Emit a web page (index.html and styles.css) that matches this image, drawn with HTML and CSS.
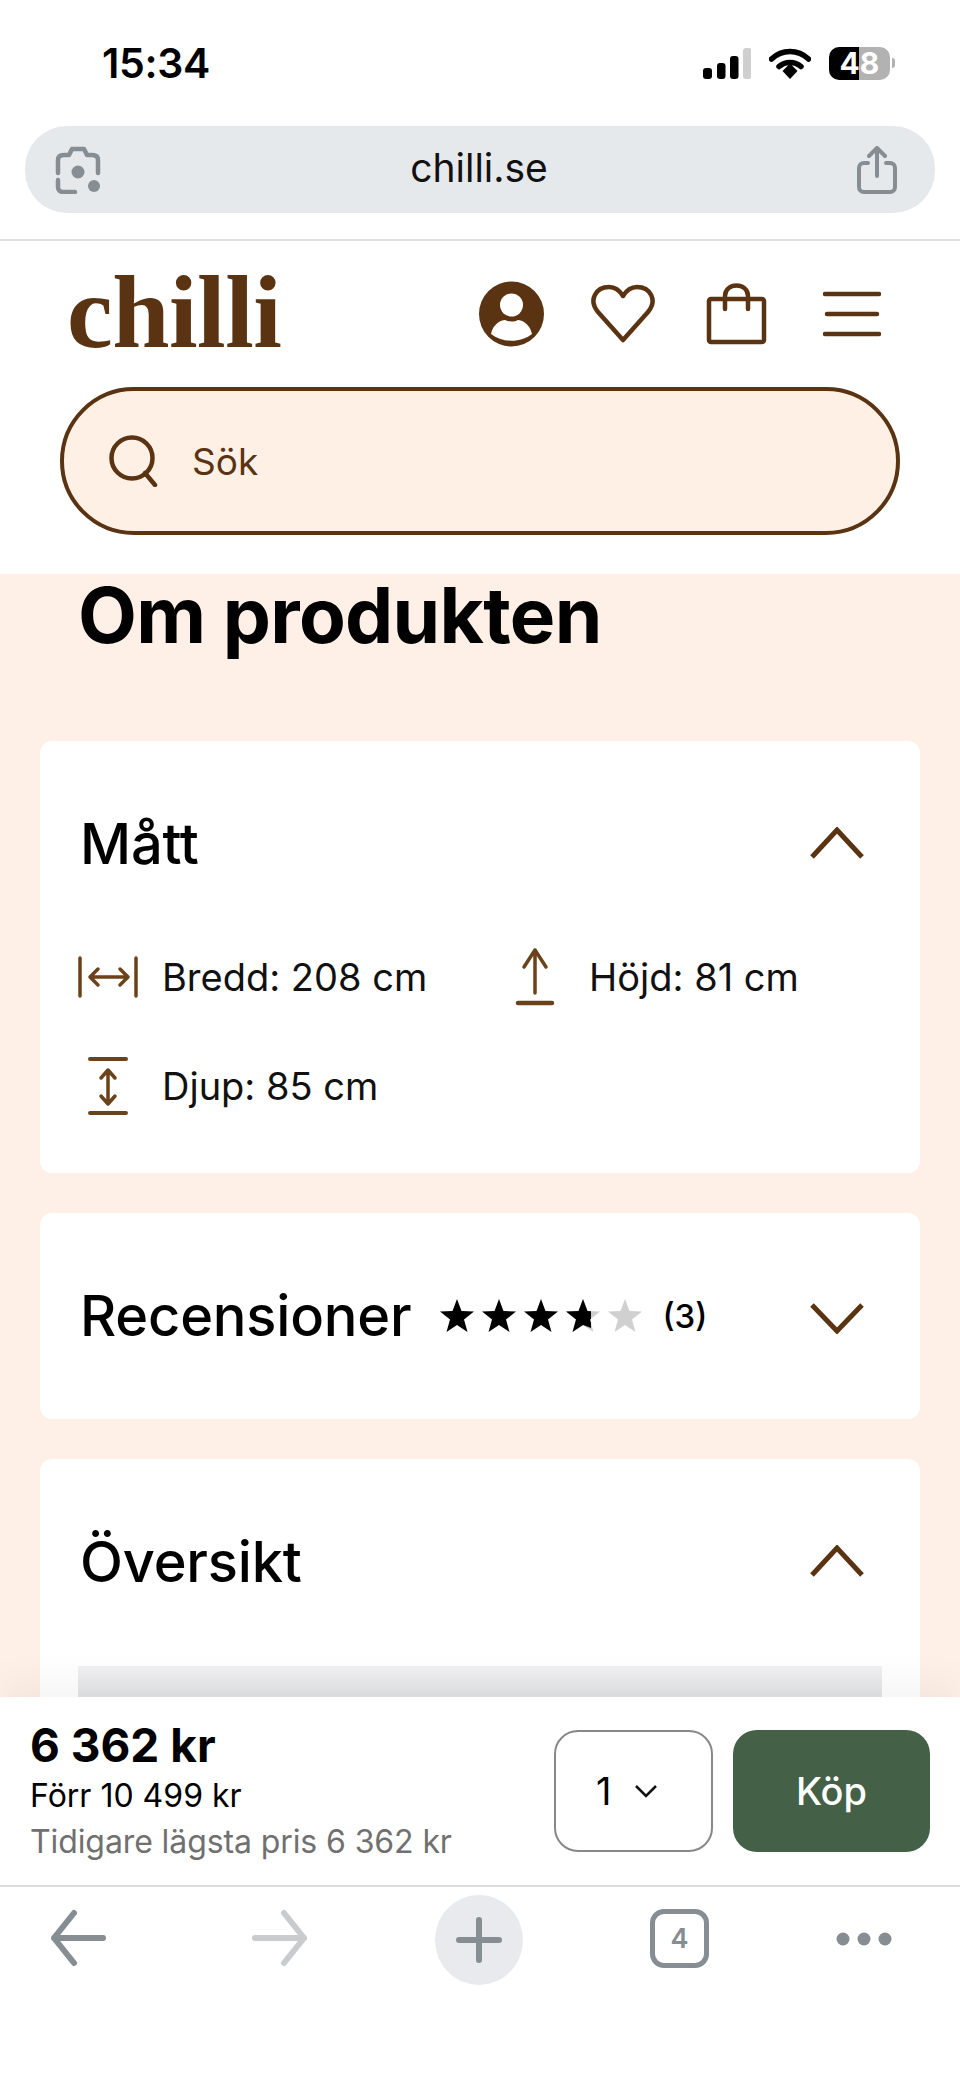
FILE: index.html

```html
<!DOCTYPE html>
<html lang="sv">
<head>
  <meta charset="UTF-8" />
  <meta name="viewport" content="width=device-width, initial-scale=1.0" />
  <title>Chilli - Om produkten</title>
  <link rel="stylesheet" href="styles.css">
</head>
<body>
  <div class="phone">
    <div class="status-bar">
      <span class="time">15:34</span>
      <div class="status-icons">
        <svg class="signal" width="48" height="31" viewBox="0 0 48 31">
          <rect x="0" y="20" width="9" height="11" rx="3" fill="#000"/>
          <rect x="14" y="15" width="8.500" height="16" rx="3" fill="#000"/>
          <rect x="27" y="8" width="8.500" height="23" rx="3" fill="#000"/>
          <rect x="40" y="0" width="8.500" height="31" rx="3" fill="#cfcfcf"/>
        </svg>
        <svg class="wifi" width="42" height="31" viewBox="0 0 42 31">
          <path d="M2.500 11 C13 1 29 1 39.500 11" fill="none" stroke="#000" stroke-width="5.500" stroke-linecap="round"/>
          <path d="M10 18.500 C16 13 26 13 32 18.500" fill="none" stroke="#000" stroke-width="5.500" stroke-linecap="round"/>
          <path d="M13.500 23 L21 15.500 L28.500 23 L21 31 Z" fill="#000"/>
        </svg>
        <div class="battery"><span>48</span></div>
        <span class="battery-nub"></span>
      </div>
    </div>

    <div class="address-wrap">
      <div class="address-bar">
        <svg width="46" height="48" viewBox="0 0 46 48" fill="none" stroke="#868e94" stroke-width="4.500" stroke-linecap="round" stroke-linejoin="round">
          <path d="M3 27 V14 C3 11 5 9 9 9 H14 L17 3 H29 L32 9 H37 C41 9 43 11 43 14 V27"/>
          <path d="M3 34 V41 C3 44 5 46 8 46 H20"/>
          <circle cx="23" cy="26" r="6.500" fill="#868e94" stroke="none"/>
          <circle cx="39" cy="40" r="6" fill="#868e94" stroke="none"/>
        </svg>
        <span class="url">chilli.se</span>
        <svg width="40" height="48" viewBox="0 0 40 48" fill="none" stroke="#868e94" stroke-width="4" stroke-linecap="round" stroke-linejoin="round">
          <path d="M20 30 V3 M12 10 L20 2 L28 10"/>
          <path d="M11 17 H7 C4 17 2 19 2 22 V41 C2 44 4 46 7 46 H33 C36 46 38 44 38 41 V22 C38 19 36 17 33 17 H29"/>
        </svg>
      </div>
    </div>

    <header class="site-header">
      <div class="header-row">
        <span class="logo">chilli</span>
        <nav class="header-icons">
          <svg class="icon-user" width="65" height="66" viewBox="0 0 65 66">
            <circle cx="32.500" cy="33" r="32.500" fill="#5a3412"/>
            <circle cx="32.500" cy="24" r="11.500" fill="#fff"/>
            <path d="M12 53 C14 43 22 39 26 39 C30 41 35 41 39 39 C43 39 51 43 53 53 C42 62 23 62 12 53 Z" fill="#fff"/>
          </svg>
          <svg class="icon-heart" width="64" height="60" viewBox="0 0 64 60" fill="none" stroke="#5a3412" stroke-width="4.500" stroke-linejoin="round">
            <path d="M32 56 L7 28 C-3 16 5 3 18 3 C25 3 29 7 32 12 C35 7 39 3 46 3 C59 3 67 16 57 28 Z"/>
          </svg>
          <svg class="icon-bag" width="61" height="62" viewBox="0 0 61 62" fill="none" stroke="#5a3412" stroke-width="4.500" stroke-linecap="round" stroke-linejoin="round">
            <rect x="3" y="16" width="55" height="43" rx="2"/>
            <path d="M19 26 V13 C19 -1 42 -1 42 13 V26"/>
          </svg>
          <svg class="icon-menu" width="58" height="46" viewBox="0 0 58 46" fill="none" stroke="#5a3412" stroke-width="4.500" stroke-linecap="round">
            <path d="M2 3 H56 M4 23 H54 M2 43 H56"/>
          </svg>
        </nav>
      </div>
      <div class="search">
        <svg width="50" height="52" viewBox="0 0 50 52" fill="none" stroke="#5a3412" stroke-width="4.500" stroke-linecap="round">
          <circle cx="24" cy="23" r="20.500"/>
          <path d="M37 38 L47 50"/>
        </svg>
        <span class="search-text">Sök</span>
      </div>
    </header>

    <main class="content">
      <h1>Om produkten</h1>

      <section class="card">
        <div class="card-head">
          <h2>Mått</h2>
          <svg class="chevron" width="54" height="32" viewBox="0 0 54 32" fill="none" stroke="#5a3412" stroke-width="5">
            <path d="M2 30 L27 3 L52 30"/>
          </svg>
        </div>
        <div class="measures">
          <div class="measure">
            <svg width="60" height="60" viewBox="0 0 60 60" fill="none" stroke="#6b421a" stroke-width="3.500" stroke-linecap="round" stroke-linejoin="round">
              <path d="M2 11 V49 M58 11 V49 M14 30 H48 M20 22 L12 30 L20 38 M42 22 L50 30 L42 38"/>
            </svg>
            <span>Bredd: 208 cm</span>
          </div>
          <div class="measure">
            <svg width="60" height="60" viewBox="0 0 60 60" fill="none" stroke="#6b421a" stroke-linecap="round" stroke-linejoin="round">
              <path stroke-width="3.500" d="M30 3 V46 M19 20 L30 3 L41 20"/>
              <path stroke-width="4.500" d="M13 56 H47"/>
            </svg>
            <span>Höjd: 81 cm</span>
          </div>
          <div class="measure">
            <svg width="60" height="60" viewBox="0 0 60 60" fill="none" stroke="#6b421a" stroke-linecap="round" stroke-linejoin="round">
              <path stroke-width="4" d="M12 3 H48 M12 57 H48"/>
              <path stroke-width="3.500" d="M30 14 V48 M23 22 L30 14 L37 22 M23 40 L30 48 L37 40"/>
            </svg>
            <span>Djup: 85 cm</span>
          </div>
        </div>
      </section>

      <section class="card">
        <div class="card-head">
          <div class="review-title">
            <h2>Recensioner</h2>
            <div class="stars">
              <svg width="34" height="34" viewBox="0 0 34 34"><path class="star-on" d="M17 0 L21.500 12 L34 12.500 L24 20.500 L27.500 33 L17 26 L6.500 33 L10 20.500 L0 12.500 L12.500 12 Z"/></svg>
              <svg width="34" height="34" viewBox="0 0 34 34"><path class="star-on" d="M17 0 L21.500 12 L34 12.500 L24 20.500 L27.500 33 L17 26 L6.500 33 L10 20.500 L0 12.500 L12.500 12 Z"/></svg>
              <svg width="34" height="34" viewBox="0 0 34 34"><path class="star-on" d="M17 0 L21.500 12 L34 12.500 L24 20.500 L27.500 33 L17 26 L6.500 33 L10 20.500 L0 12.500 L12.500 12 Z"/></svg>
              <svg width="34" height="34" viewBox="0 0 34 34">
                <path class="star-off" d="M17 0 L21.500 12 L34 12.500 L24 20.500 L27.500 33 L17 26 L6.500 33 L10 20.500 L0 12.500 L12.500 12 Z"/>
                <path class="star-on" d="M17 0 L21.500 12 L25 12.150 V20 L24 20.500 L25 24 V29 L17 26 L6.500 33 L10 20.500 L0 12.500 L12.500 12 Z"/>
              </svg>
              <svg width="34" height="34" viewBox="0 0 34 34"><path class="star-off" d="M17 0 L21.500 12 L34 12.500 L24 20.500 L27.500 33 L17 26 L6.500 33 L10 20.500 L0 12.500 L12.500 12 Z"/></svg>
            </div>
            <span class="review-count">(3)</span>
          </div>
          <svg class="chevron-down" width="54" height="32" viewBox="0 0 54 32" fill="none" stroke="#5a3412" stroke-width="5">
            <path d="M2 3 L27 29 L52 3"/>
          </svg>
        </div>
      </section>

      <section class="card">
        <div class="card-head">
          <h2>Översikt</h2>
          <svg class="chevron" width="54" height="32" viewBox="0 0 54 32" fill="none" stroke="#5a3412" stroke-width="5">
            <path d="M2 30 L27 3 L52 30"/>
          </svg>
        </div>
        <div class="overview-img"></div>
      </section>
    </main>

    <div class="buy-bar">
      <div class="prices">
        <div class="price">6 362 kr</div>
        <div class="old-price">Förr 10 499 kr</div>
        <div class="low-price">Tidigare lägsta pris 6 362 kr</div>
      </div>
      <div class="qty">
        <span>1</span>
        <svg width="24" height="14" viewBox="0 0 24 14" fill="none" stroke="#111" stroke-width="2.500">
          <path d="M2 2 L12 12 L22 2"/>
        </svg>
      </div>
      <button class="buy-btn">Köp</button>
    </div>

    <div class="toolbar">
      <svg width="56" height="60" viewBox="0 0 56 60" fill="none" stroke="#868e94" stroke-width="6" stroke-linecap="round" stroke-linejoin="round">
        <path d="M53 30 H4 M24 5 L4 30 L24 55"/>
      </svg>
      <svg class="forward" width="56" height="60" viewBox="0 0 56 60" fill="none" stroke="#c9cbcd" stroke-width="6" stroke-linecap="round" stroke-linejoin="round">
        <path d="M3 30 H52 M32 5 L52 30 L32 55"/>
      </svg>
      <div class="new-tab">
        <svg width="46" height="46" viewBox="0 0 46 46" fill="none" stroke="#868e94" stroke-width="6" stroke-linecap="round">
          <path d="M23 3 V43 M3 23 H43"/>
        </svg>
      </div>
      <div class="tabs">4</div>
      <svg width="56" height="16" viewBox="0 0 56 16" fill="#868e94">
        <circle cx="7" cy="8" r="6.500"/>
        <circle cx="28" cy="8" r="6.500"/>
        <circle cx="49" cy="8" r="6.500"/>
      </svg>
    </div>
  </div>
</body>
</html>
```

FILE: styles.css

```css
* {
  box-sizing: border-box;
}

body {
  margin: 0;
  background: #fff;
  font-family: 'Inter', 'Noto Sans', sans-serif;
  color: #000;
}

svg {
  display: block;
  flex-shrink: 0;
}

.phone {
  width: 960px;
  height: 2078px;
  display: flex;
  flex-direction: column;
  overflow: hidden;
}

/* iOS status bar */
.status-bar {
  height: 126px;
  flex-shrink: 0;
  display: flex;
  justify-content: space-between;
  align-items: center;
  padding: 0 65px 0 102px;
}

.time {
  font-size: 41px;
  font-weight: 600;
  letter-spacing: -0.3px;
}

.status-icons {
  display: flex;
  align-items: center;
}

.wifi {
  margin-left: 18px;
}

.battery {
  width: 61px;
  height: 33px;
  margin-left: 18px;
  border-radius: 10px;
  background: linear-gradient(to right, #000 49%, #b2b2b2 49%);
  color: #fff;
  font-size: 30px;
  font-weight: 700;
  display: flex;
  justify-content: center;
  align-items: center;
}

.battery-nub {
  width: 3px;
  height: 10px;
  margin-left: 2px;
  border-radius: 0 3px 3px 0;
  background: #b2b2b2;
}

/* browser address bar */
.address-wrap {
  height: 115px;
  flex-shrink: 0;
  padding: 0 25px;
  border-bottom: 2px solid #dfdfdf;
}

.address-bar {
  height: 87px;
  border-radius: 42px;
  background: #e6e9ec;
  display: flex;
  justify-content: space-between;
  align-items: center;
  padding: 0 38px 0 30px;
}

.url {
  font-size: 39px;
  color: #111;
  margin-top: -4px;
}

/* site header */
.site-header {
  height: 333px;
  flex-shrink: 0;
  padding: 12px 60px 0;
}

.header-row {
  height: 122px;
  margin-bottom: 12px;
  display: flex;
  justify-content: space-between;
  align-items: center;
  padding: 0 19px 0 7px;
}

.logo {
  font-family: 'Liberation Serif', serif;
  font-size: 103px;
  font-weight: 700;
  line-height: 1;
  color: #5a3412;
  letter-spacing: -0.5px;
  margin-top: -3px;
}

.header-icons {
  display: flex;
  align-items: center;
  gap: 47px;
}

.icon-bag {
  margin-left: 4px;
}

.icon-menu {
  margin-left: 9px;
}

.search {
  height: 148px;
  border: 4.500px solid #5a3412;
  border-radius: 74px;
  background: #fff0e6;
  display: flex;
  align-items: center;
  gap: 34px;
  padding: 0 44px;
}

.search-text {
  font-size: 37px;
  color: #5a3412;
}

/* product content, runs on under the buy bar */
.content {
  flex: 1;
  min-height: 0;
  background: #fef0e6;
  padding: 0 40px;
}

h1 {
  margin: 0 0 81px 38px;
  font-size: 76.500px;
  line-height: 86px;
  font-weight: 700;
  letter-spacing: -0.7px;
  position: relative;
  top: -2px;
}

h2 {
  margin: 0;
  font-size: 56px;
  font-weight: 500;
  letter-spacing: -0.2px;
}

.card {
  background: #fff;
  border-radius: 12px;
  margin-bottom: 40px;
}

.card-head {
  height: 206px;
  display: flex;
  justify-content: space-between;
  align-items: center;
  padding: 0 56px 0 40px;
}

.chevron {
  margin-top: -2px;
}

.chevron-down {
  margin-top: 3px;
}

.measures {
  display: grid;
  grid-template-columns: 427px 1fr;
  row-gap: 49px;
  padding: 0 0 57px 38px;
}

.measure {
  display: flex;
  align-items: center;
  gap: 24px;
  font-size: 38px;
  color: #111;
}

.review-title {
  display: flex;
  align-items: center;
}

.stars {
  display: flex;
  gap: 8px;
  margin-left: 29px;
}

.star-on {
  fill: #000;
}

.star-off {
  fill: #d0d0d0;
}

.review-count {
  margin-left: 20px;
  font-size: 33px;
  font-weight: 500;
}

.overview-img {
  height: 300px;
  margin: 1px 38px 0;
  background: linear-gradient(to bottom, #f1f1f3, #e3e4e6 30px);
}

/* sticky buy bar */
.buy-bar {
  height: 190px;
  flex-shrink: 0;
  position: relative;
  background: #fff;
  box-shadow: 0 -12px 40px rgba(0, 0, 0, 0.05);
  border-bottom: 2px solid #dcdcdc;
  display: flex;
  align-items: center;
  padding: 0 30px;
}

.prices {
  flex: 1;
}

.price {
  font-size: 46px;
  font-weight: 700;
  line-height: 58px;
}

.old-price {
  font-size: 32px;
  line-height: 44px;
}

.low-price {
  font-size: 32px;
  line-height: 48px;
  color: #707070;
  letter-spacing: -0.1px;
}

.qty {
  width: 159px;
  height: 122px;
  border: 2px solid #888;
  border-radius: 24px;
  display: flex;
  align-items: center;
  gap: 23px;
  padding-left: 40px;
  font-size: 38px;
}

.buy-btn {
  width: 197px;
  height: 122px;
  margin-left: 20px;
  border: none;
  border-radius: 24px;
  background: #446047;
  color: #fff;
  font-family: inherit;
  font-size: 38px;
  font-weight: 500;
}

/* browser toolbar */
.toolbar {
  height: 191px;
  flex-shrink: 0;
  position: relative;
  background: #fff;
  display: flex;
  align-items: flex-start;
  gap: 127px;
  padding-left: 50px;
}

.toolbar > svg {
  margin-top: 21px;
}

.toolbar > svg.forward {
  margin-left: 19px;
}

.toolbar > svg:last-child {
  margin-top: 44px;
}

.new-tab {
  width: 88px;
  height: 90px;
  margin-top: 8px;
  border-radius: 50%;
  background: #e8eaed;
  display: flex;
  justify-content: center;
  align-items: center;
}

.tabs {
  width: 59px;
  height: 59px;
  margin-top: 22px;
  border: 5px solid #868e94;
  border-radius: 14px;
  color: #868e94;
  font-size: 27px;
  font-weight: 600;
  display: flex;
  justify-content: center;
  align-items: center;
}
```
